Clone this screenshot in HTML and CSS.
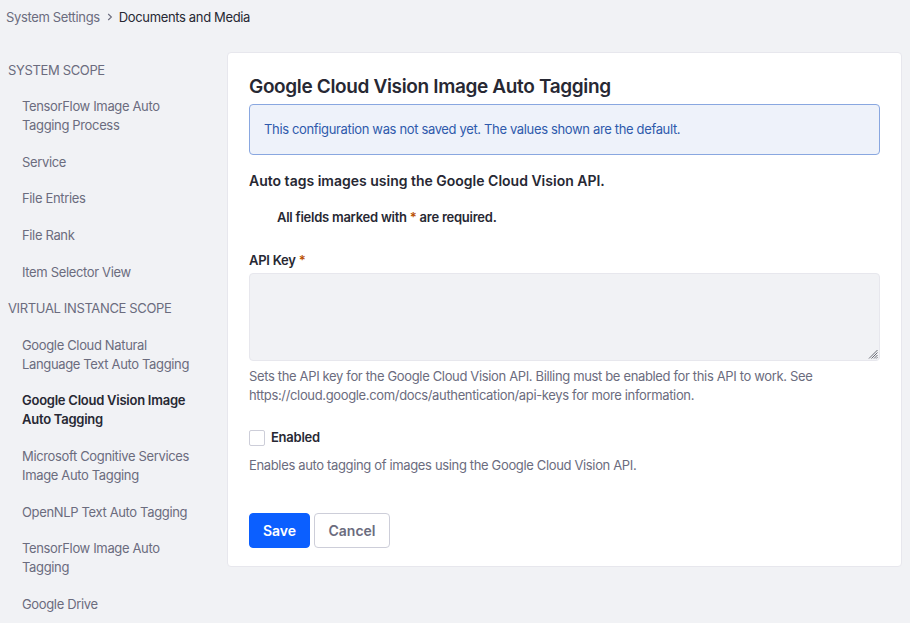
FILE: index.html
```html
<!DOCTYPE html>
<html lang="en">
<head>
<meta charset="utf-8">
<title>System Settings - Documents and Media</title>
<link rel="stylesheet" href="styles.css">
</head>
<body>
<nav class="breadcrumb">
  <span class="crumb">System Settings</span>
  <svg class="chev" width="8" height="8" viewBox="0 0 8 8"><path d="M2.2 1 L5.4 4 L2.2 7" fill="none" stroke="#6b6c7e" stroke-width="1.1"/></svg>
  <span class="crumb current">Documents and Media</span>
</nav>
<div class="layout">
  <aside class="sidebar">
    <div class="scope">SYSTEM SCOPE</div>
    <ul class="items">
      <li>TensorFlow Image Auto Tagging Process</li>
      <li>Service</li>
      <li>File Entries</li>
      <li>File Rank</li>
      <li>Item Selector View</li>
    </ul>
    <div class="scope">VIRTUAL INSTANCE SCOPE</div>
    <ul class="items">
      <li>Google Cloud Natural Language Text Auto Tagging</li>
      <li class="active">Google Cloud Vision Image Auto Tagging</li>
      <li>Microsoft Cognitive Services Image Auto Tagging</li>
      <li>OpenNLP Text Auto Tagging</li>
      <li>TensorFlow Image Auto Tagging</li>
      <li>Google Drive</li>
    </ul>
  </aside>
  <main class="card">
    <h1 class="title">Google Cloud Vision Image Auto Tagging</h1>
    <div class="alert">This configuration was not saved yet. The values shown are the default.</div>
    <p class="desc">Auto tags images using the Google Cloud Vision API.</p>
    <p class="required">All fields marked with <span class="star">*</span> are required.</p>
    <label class="label">API Key <span class="star">*</span></label>
    <div class="textarea">
      <svg class="grip" width="10" height="10" viewBox="0 0 10 10"><path d="M9.5 1 L1 9.5 M9.5 3.5 L3.5 9.5 M9.5 6 L6 9.5 M9.5 8.2 L8.2 9.5" stroke="#5a5b68" stroke-width="0.9"/></svg>
    </div>
    <p class="help first">Sets the API key for the Google Cloud Vision API. Billing must be enabled for this API to work. See https://cloud.google.com/docs/authentication/api-keys for more information.</p>
    <div class="check-row">
      <span class="checkbox"></span>
      <span class="check-label">Enabled</span>
    </div>
    <p class="help second">Enables auto tagging of images using the Google Cloud Vision API.</p>
    <div class="actions">
      <button class="btn primary">Save</button>
      <button class="btn secondary">Cancel</button>
    </div>
  </main>
</div>
</body>
</html>
```
FILE: styles.css
```css
* { box-sizing: border-box; }
html, body { margin: 0; padding: 0; }
body {
  background: #f1f2f5;
  font-family: Inter, "Noto Sans", "Liberation Sans", sans-serif;
  color: #272833;
  font-size: 13px;
  letter-spacing: -0.35px;
  width: 910px;
  height: 623px;
  overflow: hidden;
}
.breadcrumb {
  display: flex;
  align-items: center;
  height: 34px;
  padding: 0 0 0 6px;
  gap: 5px;
  font-size: 13px;
}
.crumb { color: #6b6c7e; }
.crumb.current { color: #272833; }
.chev { margin: 0 0 0 1px; }
.layout {
  display: flex;
  padding-top: 18px;
}
.sidebar {
  width: 227px;
  flex: none;
  padding-right: 24px;
}
.scope {
  color: #6b6c7e;
  padding: 9px 0 8.5px 8px;
  line-height: 19px;
  font-size: 13px;
}
.items {
  list-style: none;
  margin: 0;
  padding: 0;
}
.items li {
  padding: 8.8px 0 8.8px 22px;
  line-height: 19px;
  color: #6b6c7e;
}
.items li.active {
  color: #272833;
  font-weight: 600;
  letter-spacing: -0.25px;
}
.card {
  width: 675px;
  flex: none;
  align-self: flex-start;
  background: #fff;
  border: 1px solid #e7e7ed;
  border-radius: 4px;
  padding: 22px 21px 18px 21px;
}
.title {
  margin: 0;
  font-size: 19px;
  font-weight: 600;
  line-height: 24px;
  letter-spacing: -0.35px;
  color: #272833;
}
.alert {
  margin-top: 5px;
  background: #eef2fa;
  border: 1px solid #89a7e0;
  border-radius: 4px;
  padding: 15px 14px;
  line-height: 19px;
  color: #2e5aac;
  font-size: 13px;
}
.desc {
  margin: 16px 0 0;
  font-size: 14px;
  font-weight: 600;
  line-height: 20px;
  letter-spacing: 0;
}
.required {
  margin: 17px 0 0;
  padding-left: 28px;
  font-weight: 600;
  line-height: 19px;
  letter-spacing: -0.25px;
}
.star { color: #b95000; }
.label {
  display: block;
  margin-top: 24px;
  font-weight: 600;
  line-height: 19px;
  letter-spacing: -0.25px;
}
.textarea {
  position: relative;
  margin-top: 3px;
  height: 88px;
  background: #f1f2f5;
  border: 1px solid #e7e7ed;
  border-radius: 4px;
}
.grip {
  position: absolute;
  right: 1px;
  bottom: 1px;
}
.help {
  margin: 0;
  color: #6b6c7e;
  line-height: 19px;
}
.help.first { margin-top: 6px; }
.check-row {
  display: flex;
  align-items: center;
  gap: 6px;
  margin-top: 23px;
  height: 19px;
}
.checkbox {
  width: 16px;
  height: 16px;
  border: 1px solid #cdced9;
  border-radius: 2px;
  background: #fff;
}
.check-label {
  font-weight: 600;
  line-height: 19px;
  letter-spacing: -0.25px;
}
.help.second { margin-top: 9px; }
.actions {
  display: flex;
  gap: 4px;
  margin-top: 38px;
}
.btn {
  height: 35px;
  border-radius: 4px;
  font-family: inherit;
  font-size: 14px;
  font-weight: 600;
  padding: 0;
  line-height: 20px;
  letter-spacing: 0;
}
.btn.primary {
  background: #0b5fff;
  color: #fff;
  border: 1px solid #0b5fff;
  width: 61px;
}
.btn.secondary {
  background: #fff;
  color: #6b6c7e;
  border: 1px solid #cdced9;
  width: 76px;
}
```
